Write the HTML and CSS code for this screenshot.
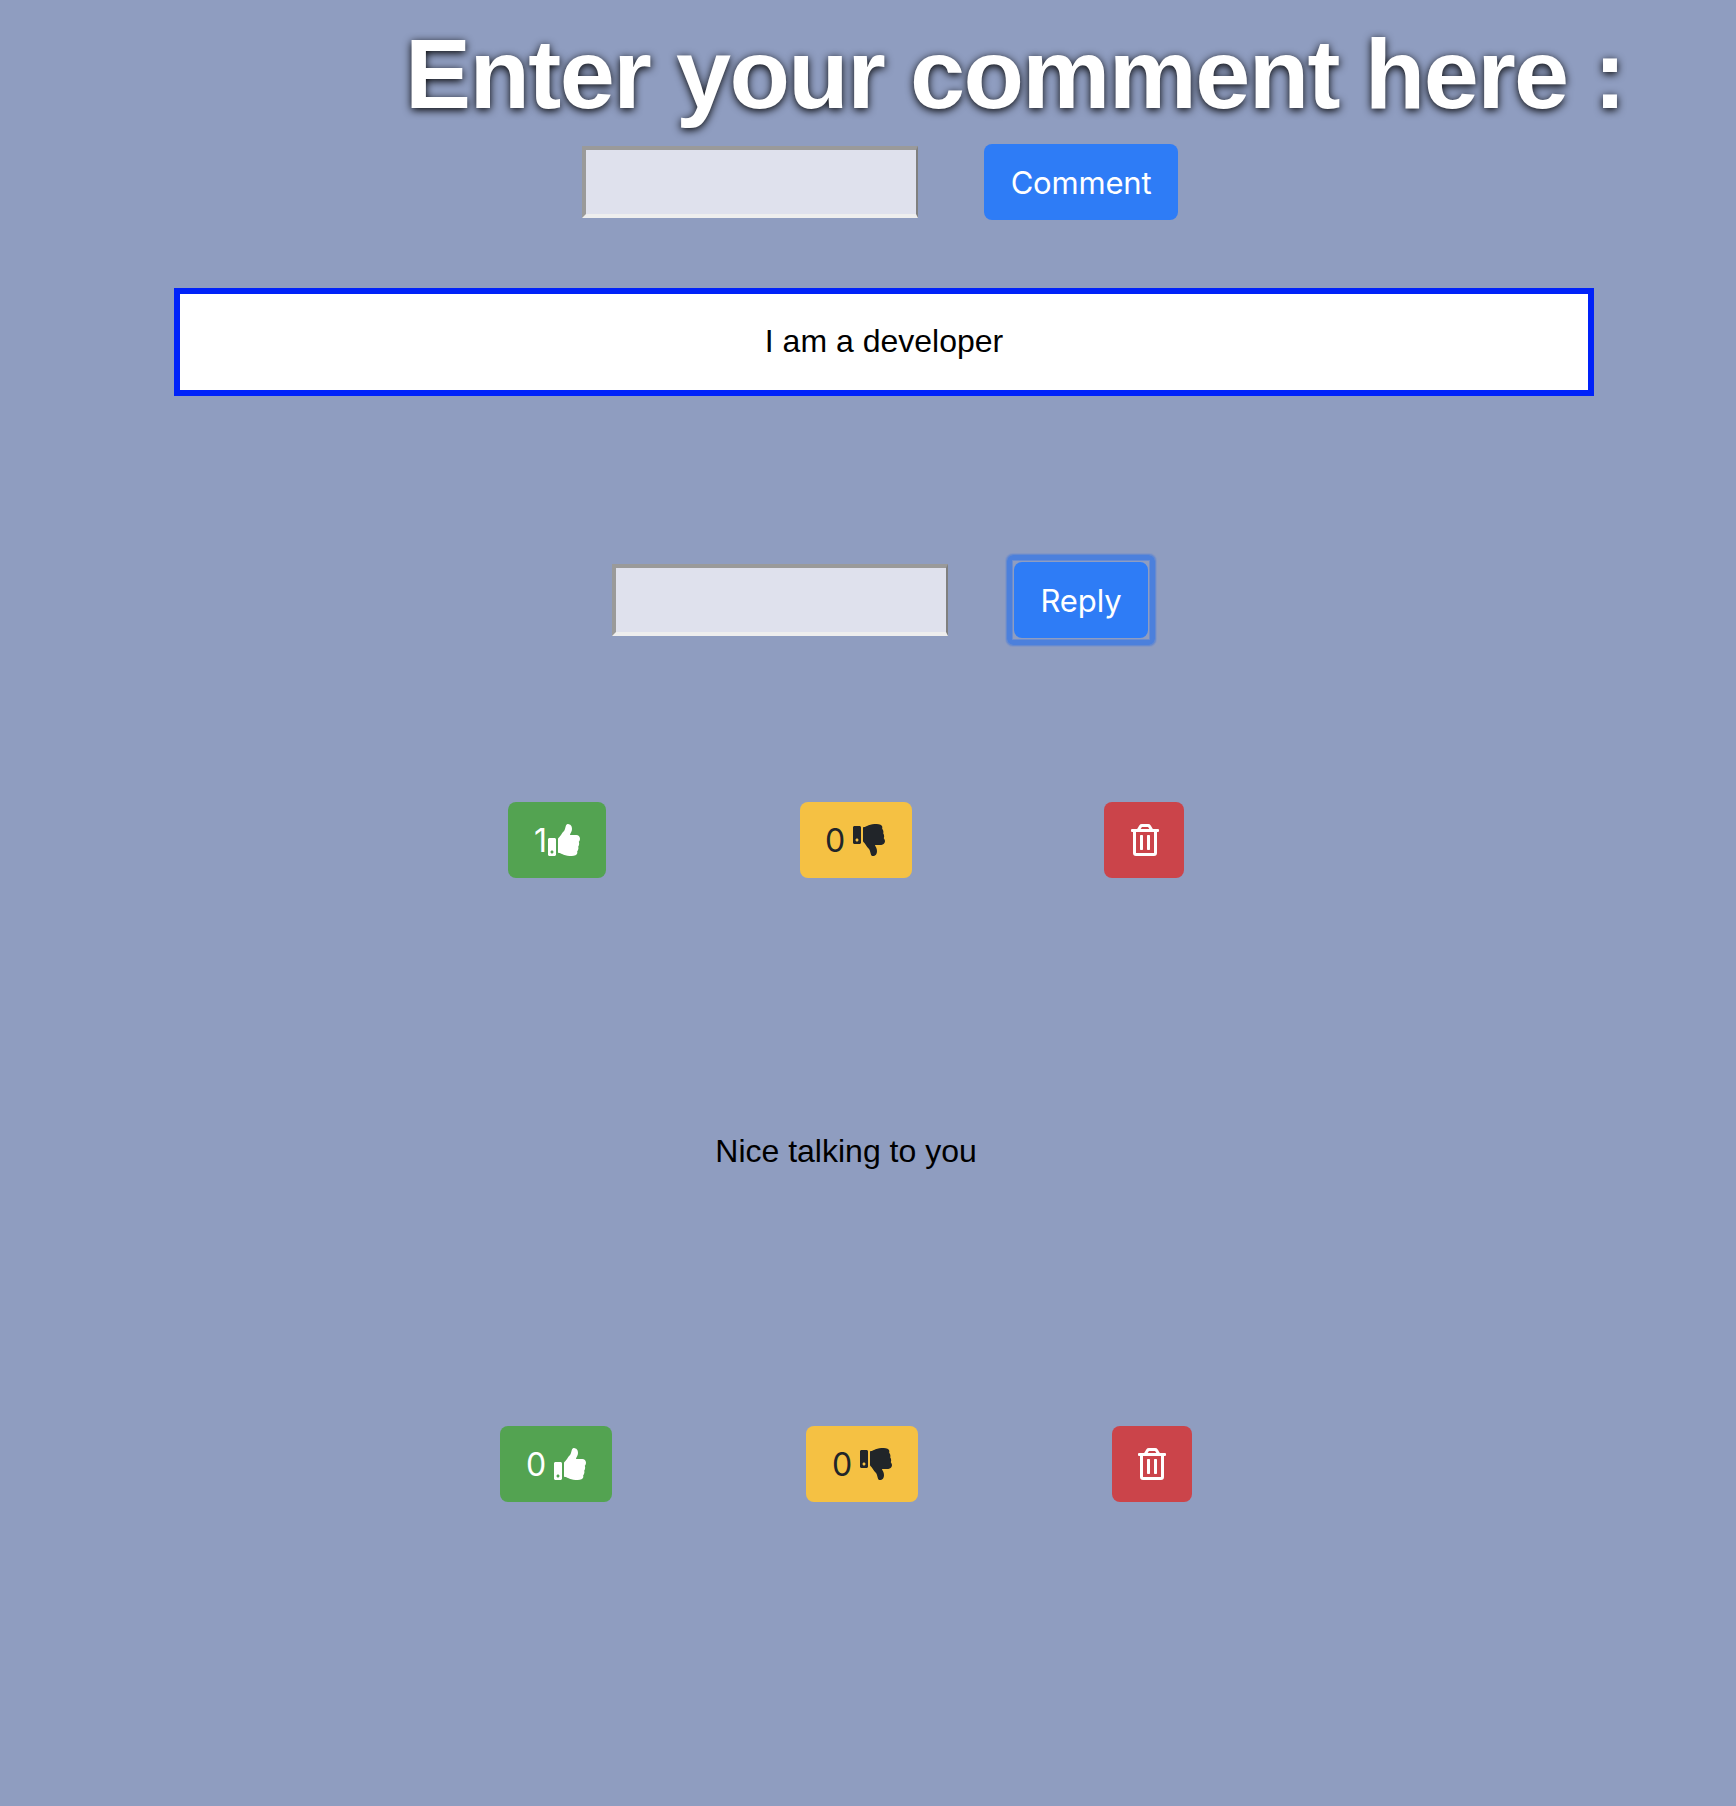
FILE: index.html
```html
<!DOCTYPE html>
<html lang="en">
<head>
<meta charset="utf-8">
<title>Comments</title>
<link rel="stylesheet" href="styles.css">
</head>
<body>
<svg class="sprite" aria-hidden="true">
  <symbol id="up" viewBox="0 0 512 512"><path d="M104 224H24c-13.255 0-24 10.745-24 24v240c0 13.255 10.745 24 24 24h80c13.255 0 24-10.745 24-24V248c0-13.255-10.745-24-24-24zM64 472c-13.255 0-24-10.745-24-24s10.745-24 24-24 24 10.745 24 24-10.745 24-24 24zM384 81.452c0 42.416-25.97 66.208-33.277 94.548h101.723c33.397 0 59.397 27.746 59.553 58.098.084 17.938-7.546 37.249-19.439 49.197l-.11.11c9.836 23.337 8.237 56.037-9.308 79.469 8.681 25.895-.069 57.704-16.382 74.757 4.298 17.598 2.244 32.575-6.148 44.632C440.202 511.587 389.616 512 346.839 512l-2.845-.001c-48.287-.017-87.806-17.598-119.56-31.725-15.957-7.099-36.821-15.887-52.651-16.178-6.54-.12-11.783-5.457-11.783-11.998v-213.77c0-3.2 1.282-6.271 3.558-8.521 39.614-39.144 56.648-80.587 89.117-113.111 14.804-14.832 20.188-37.236 25.393-58.902C282.515 39.293 291.817 0 312 0c24 0 72 8 72 81.452z"/></symbol>
  <symbol id="down" viewBox="0 0 512 512"><path d="M0 56v240c0 13.255 10.745 24 24 24h80c13.255 0 24-10.745 24-24V56c0-13.255-10.745-24-24-24H24C10.745 32 0 42.745 0 56zm40 200c0-13.255 10.745-24 24-24s24 10.745 24 24-10.745 24-24 24-24-10.745-24-24zm272 256c-20.183 0-29.485-39.293-33.931-57.795-5.206-21.666-10.589-44.07-25.393-58.902-32.469-32.524-49.503-73.967-89.117-113.111a11.98 11.98 0 0 1-3.558-8.521V59.901c0-6.541 5.243-11.878 11.783-11.998 15.831-.29 36.694-9.079 52.651-16.178C256.189 17.598 295.709.017 343.995 0h2.844c42.777 0 93.363.413 113.774 29.737 8.392 12.057 10.446 27.034 6.148 44.632 16.312 17.053 25.063 48.863 16.382 74.757 17.544 23.432 19.143 56.132 9.308 79.469l.11.11c11.893 11.949 19.523 31.259 19.439 49.197-.156 30.352-26.157 58.098-59.553 58.098H350.723C358.03 364.34 384 388.132 384 430.548 384 504 336 512 312 512z"/></symbol>
  <symbol id="trash" viewBox="0 0 448 512"><path d="M268 416h24a12 12 0 0 0 12-12V188a12 12 0 0 0-12-12h-24a12 12 0 0 0-12 12v216a12 12 0 0 0 12 12zM432 80h-82.41l-34-56.7A48 48 0 0 0 274.41 0H173.59a48 48 0 0 0-41.16 23.3L98.41 80H16A16 16 0 0 0 0 96v16a16 16 0 0 0 16 16h16v336a48 48 0 0 0 48 48h288a48 48 0 0 0 48-48V128h16a16 16 0 0 0 16-16V96a16 16 0 0 0-16-16zM171.84 50.91A6 6 0 0 1 177 48h94a6 6 0 0 1 5.15 2.91L293.61 80H154.39zM368 464H80V128h288zm-212-48h24a12 12 0 0 0 12-12V188a12 12 0 0 0-12-12h-24a12 12 0 0 0-12 12v216a12 12 0 0 0 12 12z"/></symbol>
</svg>
<h1 class="title">Enter your comment here :</h1>
<form class="entry">
  <input class="field" type="text" aria-label="Comment">
  <button class="btn primary comment" type="button">Comment</button>
</form>
<p class="comment-box">I am a developer</p>
<form class="entry reply-entry">
  <input class="field" type="text" aria-label="Reply">
  <button class="btn primary reply" type="button">Reply</button>
</form>
<div class="actions">
  <button class="btn success liked" type="button"><span>1</span><svg class="icon"><use href="#up"/></svg></button>
  <button class="btn warning" type="button"><span>0</span><svg class="icon"><use href="#down"/></svg></button>
  <button class="btn danger" type="button" aria-label="Delete"><svg class="icon trash"><use href="#trash"/></svg></button>
</div>
<p class="reply-text">Nice talking to you</p>
<div class="actions reply-actions">
  <button class="btn success" type="button"><span>0</span><svg class="icon"><use href="#up"/></svg></button>
  <button class="btn warning" type="button"><span>0</span><svg class="icon"><use href="#down"/></svg></button>
  <button class="btn danger" type="button" aria-label="Delete"><svg class="icon trash"><use href="#trash"/></svg></button>
</div>
</body>
</html>
```
FILE: styles.css
```css
* { box-sizing: border-box; }
body {
  margin: 0;
  height: 1806px;
  overflow: hidden;
  background: #8f9dc0;
  font-family: "Liberation Sans", Arial, sans-serif;
  font-size: 32px;
  line-height: 48px;
  color: #000;
  display: flex;
  flex-direction: column;
}
.sprite { display: none; }
.title {
  margin: 16px 0 0 405px;
  height: 128px;
  font-size: 99px;
  line-height: 116px;
  font-weight: 700;
  letter-spacing: -1.6px;
  white-space: nowrap;
  color: #fff;
  text-shadow: 0 2px 8px #000;
}
.entry { display: flex; align-items: center; gap: 66px; margin-left: 582px; height: 76px; }
.reply-entry { margin: 166px 0 0 612px; }
.field {
  width: 336px;
  height: 72px;
  padding: 4px;
  border-style: solid;
  border-width: 4px 2px 4px 4px;
  border-color: #9a9a9a #808080 #eee #9a9a9a;
  background: #dfe1ed;
  font: inherit;
}
.btn {
  display: flex;
  align-items: center;
  justify-content: center;
  height: 76px;
  padding: 0;
  border: 0;
  border-radius: 8px;
  font: 32px/48px Inter, sans-serif;
  color: #fff;
}
.btn span { padding-top: 2px; }
.primary { padding-top: 2px; background: #2e7cf6; font-size: 31px; }
.comment { width: 194px; letter-spacing: -0.2px; }
.reply { position: relative; width: 134px; letter-spacing: -0.1px; }
/* focus ring */
.reply::after {
  content: "";
  position: absolute;
  inset: -7px;
  border: 5px solid #4c80dc;
  border-radius: 6px;
  box-shadow: 0 0 0 1px #668acf, 0 0 0 2px #8296c5, inset 0 0 0 1px #6b8dd1;
}
.comment-box {
  width: 1420px;
  height: 108px;
  margin: 68px 0 0 174px;
  padding: 23px 0 0;
  border: 6px solid #0022f9;
  background: #fff;
  text-align: center;
}
.actions { display: flex; margin: 164px 0 0 508px; }
.reply-actions { margin: 251px 0 0 500px; }
.icon { width: 32px; height: 32px; fill: currentColor; }
.trash { width: 28px; }
.success { width: 112px; gap: 8px; background: #53a351; }
.liked { width: 98px; gap: 1px; }
.warning { width: 112px; gap: 8px; margin-left: 194px; background: #f5c143; color: #212529; }
.actions:not(.reply-actions) .warning { padding-right: 2px; }
.danger { width: 80px; margin-left: 192px; padding-left: 1px; background: #cb444a; }
.reply-actions .danger { margin-left: 194px; padding: 0; }
.reply-text { width: 1692px; margin: 249px 0 0; text-align: center; }
```
